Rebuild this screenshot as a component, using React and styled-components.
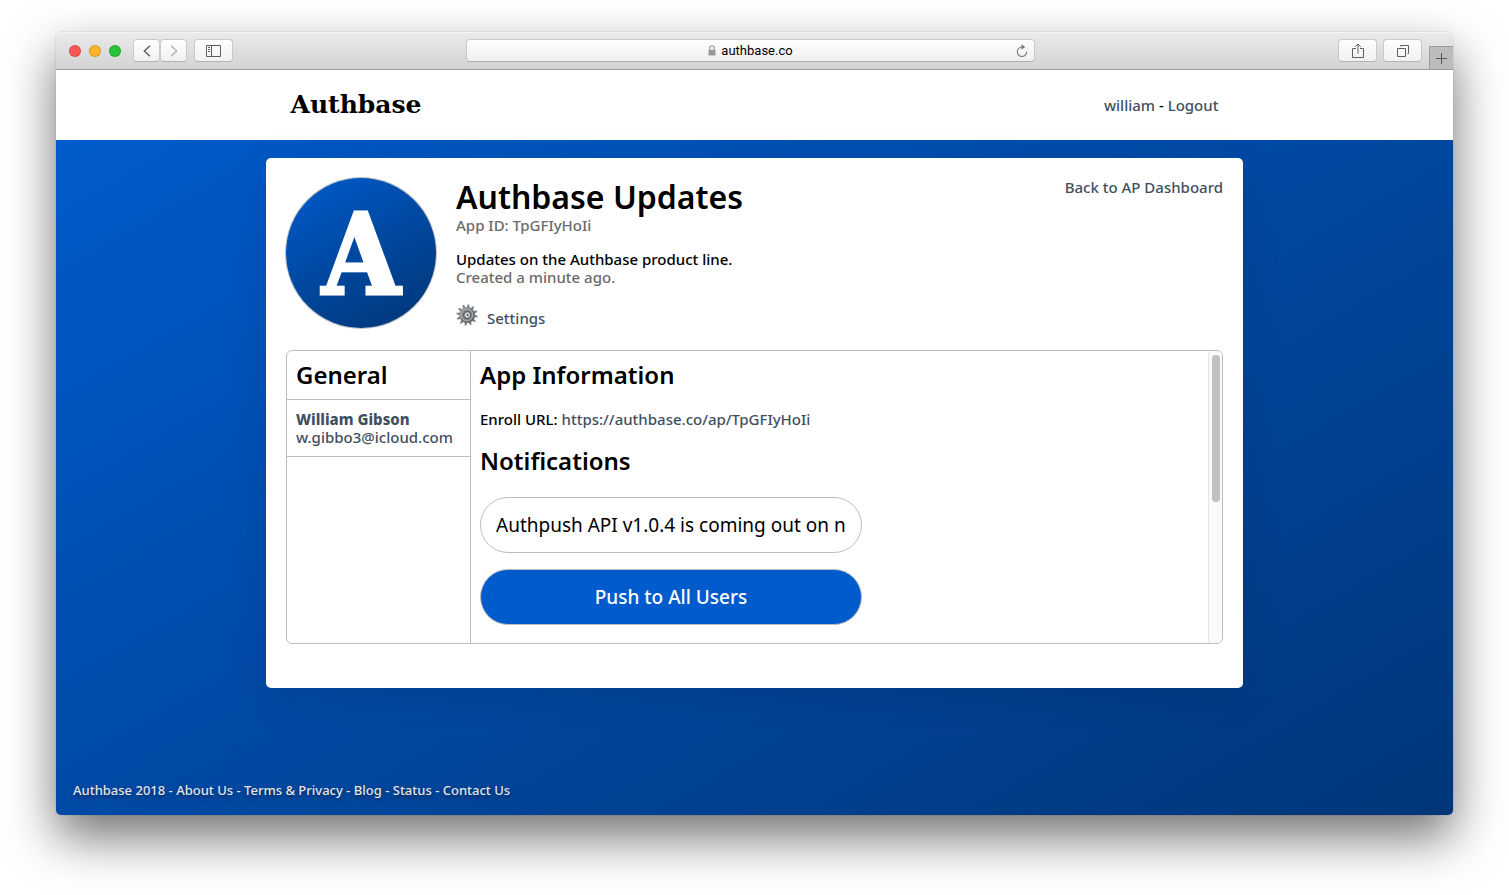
import React from 'react';
import styled, { createGlobalStyle } from 'styled-components';

const GlobalStyle = createGlobalStyle`
  * {
    box-sizing: border-box;
  }

  body {
    margin: 0;
    background: #fff;
    color: #000;
    font-family: 'Noto Sans', 'Open Sans', sans-serif;
    font-size: 15px;
    font-weight: 500;
    line-height: 18px;
  }

  a {
    color: #414f63;
    text-decoration: none;
  }

  h1, h2, p {
    margin: 0;
  }
`

const Desktop = styled.div`
  display: flex;
  min-height: 100vh;
  padding: 32px 56px 80px;
  overflow: hidden;
`

const BrowserWindow = styled.div`
  flex: 1;
  display: flex;
  flex-direction: column;
  border-radius: 6px 6px 5px 5px;
  box-shadow:
    0 0 1px rgba(0, 0, 0, 0.5),
    0 22px 50px rgba(0, 0, 0, 0.56);
`

const Toolbar = styled.div`
  display: flex;
  align-items: center;
  height: 38px;
  padding-left: 13px;
  border-bottom: 1px solid #9d9d9d;
  border-radius: 6px 6px 0 0;
  background: linear-gradient(#ebebeb, #d2d2d2);
  box-shadow: inset 0 1px 0 #f4f4f4;
  overflow: hidden;
`

const Lights = styled.div`
  display: flex;
  gap: 8px;
  margin-right: 12px;
`

const Light = styled.span`
  width: 12px;
  height: 12px;
  border: 1px solid rgba(0, 0, 0, 0.14);
  border-radius: 50%;
  background: ${props => props.color};
`

const ToolButton = styled.button`
  display: flex;
  align-items: center;
  justify-content: center;
  width: ${props => props.$narrow ? '27px' : '39px'};
  height: 23px;
  padding: 0;
  border: 1px solid #cacaca;
  border-bottom-color: #b4b4b4;
  border-radius: 4px;
  background: linear-gradient(#fefefe, #f1f1f1);
  color: ${props => props.$dim ? '#b4b4b4' : '#5e5e5e'};
`

const ToolGroup = styled.div`
  display: flex;
  gap: ${props => props.$gap || 0}px;
  margin-right: 7px;
`

const AddressArea = styled.div`
  flex: 1;
  display: flex;
  justify-content: center;
  padding-right: 70px;
`

const AddressBar = styled.div`
  display: flex;
  align-items: center;
  width: 55%;
  height: 23px;
  padding: 0 6px;
  border: 1px solid #cacaca;
  border-bottom-color: #b0b0b0;
  border-radius: 4px;
  background: linear-gradient(#fefefe, #f0f0f0);
  font-family: Roboto, sans-serif;
  font-size: 13px;
  font-weight: 400;
`

const Address = styled.div`
  flex: 1;
  display: flex;
  align-items: center;
  justify-content: center;
  gap: 5px;
  padding-left: 12px;
`

const IconButton = styled.button`
  display: flex;
  padding: 0;
  border: 0;
  background: none;
`

const NewTab = styled.button`
  display: flex;
  align-items: center;
  justify-content: center;
  align-self: flex-end;
  width: 24px;
  height: 23px;
  padding: 0;
  border: solid #9d9d9d;
  border-width: 1px 0 0 1px;
  background: #bcbcbc;
  color: #555;
`

const Header = styled.header`
  display: flex;
  justify-content: center;
  height: 70px;
  background: #fff;
`

const HeaderInner = styled.div`
  display: flex;
  align-items: center;
  justify-content: space-between;
  width: 70%;
  padding: 0 25px;
`

const Brand = styled.a`
  color: #000;
  font-family: 'DejaVu Serif', serif;
  font-size: 25px;
  font-weight: bold;
  line-height: 30px;
`

const Page = styled.div`
  flex: 1;
  display: flex;
  flex-direction: column;
  align-items: center;
  justify-content: space-between;
  padding: 18px 17px 16px;
  border-radius: 0 0 5px 5px;
  background: linear-gradient(150deg, #005bcc, #003678);
`

const Card = styled.main`
  width: 977px;
  max-width: 100%;
  padding: 20px 20px 44px;
  border-radius: 5px;
  background: #fff;
  box-shadow: 0 8px 40px rgba(0, 0, 0, 0.1);
`

const AppHeader = styled.section`
  display: flex;
  gap: 20px;
  margin-bottom: 18px;
`

const Avatar = styled.div`
  width: 150px;
  height: 150px;
  border-radius: 50%;
  background: linear-gradient(150deg, #005bcc, #003573);
  box-shadow: 0 0 0 1px #c4c4c4;
  color: #fff;
  font-family: 'DejaVu Serif Condensed', 'DejaVu Serif', serif;
  font-size: 112px;
  font-weight: bold;
  line-height: 154px;
  text-align: center;
  -webkit-text-stroke: 3px #fff;
`

const AppDetails = styled.div`
  flex: 1;
`

const Title = styled.h1`
  font-size: 32px;
  font-weight: 600;
  line-height: 38px;
`

const Muted = styled.p`
  color: #6b6b6b;
`

const Description = styled.p`
  margin-top: 16px;
`

const SettingsLink = styled.a`
  display: flex;
  gap: 9px;
  width: max-content;
  margin-top: 18px;
  line-height: 28px;
`

const Panel = styled.section`
  display: flex;
  height: 294px;
  border: 1px solid #bdbdbd;
  border-radius: 6px;
  overflow: hidden;
`

const Sidebar = styled.aside`
  width: 184px;
  border-right: 1px solid #bdbdbd;
`

const SidebarItem = styled.div`
  padding: 10px 9px;
  border-bottom: 1px solid #bdbdbd;
`

const Heading = styled.h2`
  font-size: 24px;
  font-weight: 600;
  line-height: 28px;
`

const Member = styled.a`
  display: block;
  white-space: nowrap;

  strong {
    font-weight: 800;
  }
`

const Content = styled.div`
  flex: 1;
  padding: 10px 9px;
`

const EnrollLine = styled.p`
  margin: 21px 0 19px;
`

const PushForm = styled.form`
  display: flex;
  flex-direction: column;
  gap: 16px;
  width: 382px;
  margin-top: 22px;
`

const PushInput = styled.input`
  height: 56px;
  padding: 0 15px;
  border: 1px solid #bdbdbd;
  border-radius: 28px;
  background: #fff;
  color: #000;
  font: inherit;
  font-size: 19px;
  font-weight: 400;
`

const PushButton = styled.button`
  height: 56px;
  border: 1px solid #bdbdbd;
  border-radius: 28px;
  background: #005bcc;
  color: #fff;
  font: inherit;
  font-size: 19px;
`

const ScrollTrack = styled.div`
  width: 14px;
  padding: 4px 2px 4px 3px;
  border-left: 1px solid #e6e6e6;
  background: #fafafa;
`

const ScrollThumb = styled.div`
  height: 147px;
  border-radius: 4px;
  background: #c1c1c1;
`

const Footer = styled.footer`
  align-self: flex-start;
  color: #e4e4e4;
  font-size: 13px;
  text-shadow: 0 2px 4px rgba(0, 0, 0, 0.5);

  a {
    color: inherit;
  }
`

const footerLinks = ['About Us', 'Terms & Privacy', 'Blog', 'Status', 'Contact Us'];

const Gear = () => (
  <svg width="22" height="22" viewBox="0 0 22 22" aria-hidden="true">
    <defs>
      <linearGradient id="metal" x1="0" y1="0" x2="1" y2="1">
        <stop offset="0" stopColor="#a9adb2" />
        <stop offset="1" stopColor="#4d5257" />
      </linearGradient>
    </defs>
    <g fill="url(#metal)">
      {[...Array(12)].map((_, i) => (
        <path key={i} d="M9.6 4 L10.2 .3 H11.8 L12.4 4Z" transform={`rotate(${i * 30 + 8} 11 11)`} />
      ))}
      <circle cx="11" cy="11" r="8" />
    </g>
    <circle cx="11" cy="11" r="5.8" fill="#81868c" stroke="#b5b9bd" strokeWidth=".8" />
    <circle cx="11.2" cy="11" r="3.6" fill="#a9adb2" stroke="#50555a" strokeWidth="1" />
    <circle cx="11.5" cy="11" r="2" fill="#e9ebed" />
    <circle cx="11.6" cy="11" r=".9" fill="#33373a" />
  </svg>
)

const BrowserToolbar = () => (
  <Toolbar>
    <Lights>
      <Light color="#fc5650" />
      <Light color="#fdb32a" />
      <Light color="#27c339" />
    </Lights>
    <ToolGroup>
      <ToolButton $narrow aria-label="Back">
        <svg width="8" height="12" viewBox="0 0 8 12" fill="none" stroke="currentColor" strokeWidth="1.4">
          <path d="M7 .7 L1.3 6 L7 11.3" />
        </svg>
      </ToolButton>
      <ToolButton $narrow $dim aria-label="Forward">
        <svg width="8" height="12" viewBox="0 0 8 12" fill="none" stroke="currentColor" strokeWidth="1.4">
          <path d="M1 .7 L6.7 6 L1 11.3" />
        </svg>
      </ToolButton>
    </ToolGroup>
    <ToolButton aria-label="Sidebar">
      <svg width="15" height="12" viewBox="0 0 15 12" fill="none" stroke="currentColor">
        <path d="M.5 .5 H14.5 V11.5 H.5Z M5.5 .5 V11.5 M2 2.5 H4 M2 4.5 H4 M2 6.5 H4" />
      </svg>
    </ToolButton>
    <AddressArea>
      <AddressBar>
        <Address>
          <svg width="8" height="11" viewBox="0 0 8 11">
            <path d="M1.7 5 V3 a2.3 2.3 0 0 1 4.6 0 V5" fill="none" stroke="#999" strokeWidth="1.1" />
            <rect x=".5" y="4.7" width="7" height="5.8" rx=".5" fill="#999" />
          </svg>
          authbase.co
        </Address>
        <IconButton aria-label="Reload">
          <svg width="12" height="14" viewBox="0 0 12 14">
            <path d="M6 3 A4.7 4.7 0 1 0 10.7 7.7" fill="none" stroke="#777" strokeWidth="1.1" />
            <path d="M5.5 .2 L9.2 3 L5.5 5.8Z" fill="#777" />
          </svg>
        </IconButton>
      </AddressBar>
    </AddressArea>
    <ToolGroup $gap={6}>
      <ToolButton aria-label="Share">
        <svg width="12" height="16" viewBox="0 0 12 16" fill="none" stroke="currentColor">
          <path d="M4 5.5 H.5 V14.5 H11.5 V5.5 H8 M6 10.5 V1 M3.2 3.7 L6 1 L8.8 3.7" />
        </svg>
      </ToolButton>
      <ToolButton aria-label="Show all tabs">
        <svg width="12" height="12" viewBox="0 0 12 12" fill="none" stroke="currentColor">
          <path d="M.5 3.5 H8.5 V11.5 H.5Z M3.5 1.5 V.5 H11.5 V8.5 H10.5" />
        </svg>
      </ToolButton>
    </ToolGroup>
    <NewTab aria-label="New tab">
      <svg width="11" height="11" viewBox="0 0 11 11" stroke="currentColor">
        <path d="M5.5 0 V11 M0 5.5 H11" />
      </svg>
    </NewTab>
  </Toolbar>
)

class App extends React.Component {

  state = {
    message: 'Authpush API v1.0.4 is coming out on n'
  }

  render() {
    const { message } = this.state;
    return (
      <Desktop>
        <GlobalStyle />
        <BrowserWindow>
          <BrowserToolbar />
          <Header>
            <HeaderInner>
              <Brand href="#">Authbase</Brand>
              <nav>
                <a href="#">william</a> - <a href="#">Logout</a>
              </nav>
            </HeaderInner>
          </Header>
          <Page>
            <Card>
              <AppHeader>
                <Avatar>A</Avatar>
                <AppDetails>
                  <Title>Authbase Updates</Title>
                  <Muted>App ID: TpGFIyHoIi</Muted>
                  <Description>Updates on the Authbase product line.</Description>
                  <Muted>Created a minute ago.</Muted>
                  <SettingsLink href="#"><Gear />Settings</SettingsLink>
                </AppDetails>
                <a href="#">Back to AP Dashboard</a>
              </AppHeader>
              <Panel>
                <Sidebar>
                  <SidebarItem>
                    <Heading>General</Heading>
                  </SidebarItem>
                  <SidebarItem>
                    <Member href="#">
                      <strong>William Gibson</strong><br />
                      w.gibbo3@icloud.com
                    </Member>
                  </SidebarItem>
                </Sidebar>
                <Content>
                  <Heading>App Information</Heading>
                  <EnrollLine>
                    Enroll URL: <a href="#">https://authbase.co/ap/TpGFIyHoIi</a>
                  </EnrollLine>
                  <Heading>Notifications</Heading>
                  <PushForm onSubmit={e => e.preventDefault()}>
                    <PushInput
                      aria-label="Notification"
                      value={message}
                      onChange={e => this.setState({ message: e.target.value })}
                    />
                    <PushButton>Push to All Users</PushButton>
                  </PushForm>
                </Content>
                <ScrollTrack>
                  <ScrollThumb />
                </ScrollTrack>
              </Panel>
            </Card>
            <Footer>
              Authbase 2018
              {footerLinks.map(link => <React.Fragment key={link}> - <a href="#">{link}</a></React.Fragment>)}
            </Footer>
          </Page>
        </BrowserWindow>
      </Desktop>
    );
  }
}

export default App;
